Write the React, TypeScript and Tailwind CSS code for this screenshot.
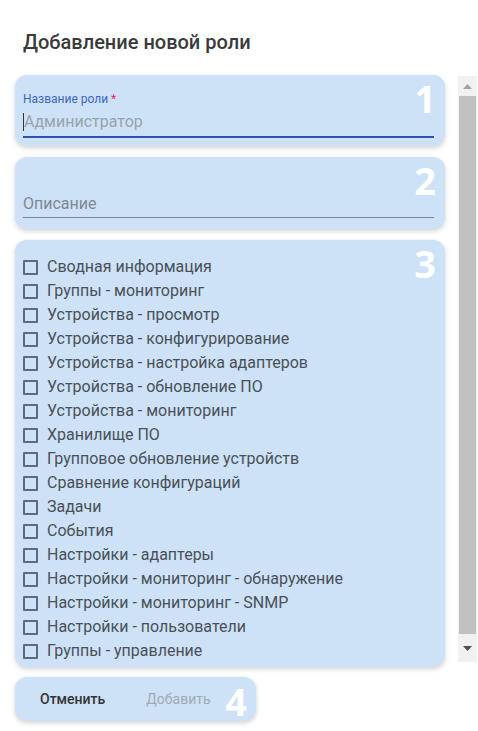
const permissions = [
  "Сводная информация",
  "Группы - мониторинг",
  "Устройства - просмотр",
  "Устройства - конфигурирование",
  "Устройства - настройка адаптеров",
  "Устройства - обновление ПО",
  "Устройства - мониторинг",
  "Хранилище ПО",
  "Групповое обновление устройств",
  "Сравнение конфигураций",
  "Задачи",
  "События",
  "Настройки - адаптеры",
  "Настройки - мониторинг - обнаружение",
  "Настройки - мониторинг - SNMP",
  "Настройки - пользователи",
  "Группы - управление",
];

function StepNumber({ n }: { n: number }) {
  return (
    <span className="pointer-events-none absolute right-[9px] top-[4px] font-['Open_Sans',sans-serif] text-[38px] font-bold leading-none text-white">
      {n}
    </span>
  );
}

function Card({ children, className = "" }: { children: React.ReactNode; className?: string }) {
  return (
    <div className={`relative rounded-[12px] bg-[#cde2f6] shadow-[0_2px_5px_rgba(0,0,0,0.18)] ${className}`}>
      {children}
    </div>
  );
}

function Scrollbar() {
  return (
    <div className="mt-[1px] flex h-[586px] w-[19px] shrink-0 flex-col bg-[#f1f1f1]">
      <div className="flex h-[20px] items-center justify-center">
        <svg width="9" height="5" viewBox="0 0 9 5">
          <path d="M0 5 L4.5 0 L9 5 Z" fill="#a3a3a3" />
        </svg>
      </div>
      <div className="mx-[1px] flex-1 bg-[#c1c1c1]" />
      <div className="flex h-[28px] items-center justify-center">
        <svg width="9" height="5" viewBox="0 0 9 5">
          <path d="M0 0 L4.5 5 L9 0 Z" fill="#505050" />
        </svg>
      </div>
    </div>
  );
}

export default function App() {
  return (
    <div className="h-[731px] w-[478px] overflow-hidden bg-white font-['Roboto',sans-serif]">
      <h2 className="pl-[23px] pt-[29px] text-[20px] font-medium leading-[26px] text-[#3a3a3a]">
        Добавление новой роли
      </h2>

      <div className="mt-[20px] flex gap-[13px]">
        <div className="ml-[15px] flex w-[430px] flex-col gap-[11px]">
          <Card className="h-[71px] pl-[8px] pr-[11px] pt-[17px]">
            <StepNumber n={1} />
            <div className="text-[12px] leading-[14px] text-[#3e66c9]">
              Название роли <span className="text-[#d6336c]">*</span>
            </div>
            <div className="mt-[3px] flex h-[29px] items-center border-b-2 border-[#2f52b5] pb-[3px] pt-[2px]">
              <span className="h-[18px] w-px bg-[#333]" />
              <span className="text-[16px] leading-[20px] text-[#9aa3ad]">Администратор</span>
            </div>
          </Card>

          <Card className="h-[72px] pl-[8px] pr-[11px] pt-[35px]">
            <StepNumber n={2} />
            <div className="flex h-[26px] items-center border-b border-[#7b8796] pb-[2px] text-[16px] leading-[20px] text-[#7f8893]">
              Описание
            </div>
          </Card>

          <Card className="px-[8px] pb-[4px] pt-[15px]">
            <StepNumber n={3} />
            {permissions.map((p) => (
              <label key={p} className="flex h-[24px] items-center gap-[9px]">
                <span className="h-[15px] w-[15px] shrink-0 rounded-[1px] border-2 border-[#5d6b7d]" />
                <span className="text-[16px] leading-[20px] text-[#4a5059]">{p}</span>
              </label>
            ))}
          </Card>
        </div>
        <Scrollbar />
      </div>

      <div className="ml-[15px] mt-[10px] w-[241px]">
        <Card className="flex h-[44px] items-center pl-[25px]">
          <button className="text-[14px] font-medium text-[#333]">Отменить</button>
          <button className="ml-[41px] text-[14px] text-[#a0a9b4]">Добавить</button>
          <span className="absolute right-[9px] top-[5px] font-['Open_Sans',sans-serif] text-[38px] font-bold leading-none text-white">
            4
          </span>
        </Card>
      </div>
    </div>
  );
}
